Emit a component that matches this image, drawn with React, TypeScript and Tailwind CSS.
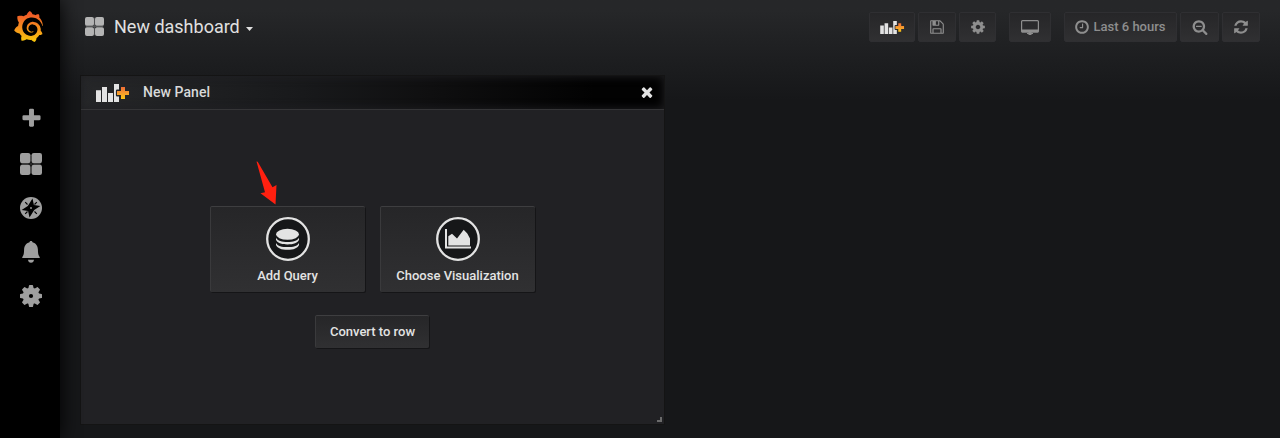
import React from 'react';
import { SiGrafana } from 'react-icons/si';

const COG =
  'M1152 896q0-106-75-181t-181-75-181 75-75 181 75 181 181 75 181-75 75-181zm512-109v222q0 12-8 23t-20 13l-185 28q-19 54-39 91 35 50 107 138 10 12 10 25t-9 23q-27 37-99 108t-94 71q-12 0-26-9l-138-108q-44 23-91 38-16 136-29 186-7 28-36 28h-222q-14 0-24.5-8.5t-11.5-21.5l-28-184q-49-16-90-37l-141 107q-10 9-25 9-14 0-25-11-126-114-165-168-7-10-7-23 0-12 8-23 15-21 51-66.5t54-70.5q-27-50-41-99l-183-27q-13-2-21-12.5t-8-23.5v-222q0-12 8-23t19-13l186-28q14-46 39-92-40-57-107-138-10-12-10-24 0-10 9-23 26-36 98.5-107.5t94.5-71.5q13 0 26 10l138 107q44-23 91-38 16-136 29-186 7-28 36-28h222q14 0 24.5 8.5t11.5 21.5l28 184q49 16 90 37l142-107q9-9 24-9 13 0 25 10 129 119 165 170 7 8 7 22 0 12-8 23-15 21-51 66.5t-54 70.5q26 50 41 98l183 28q13 2 21 12.5t8 23.5z';
const FLOPPY =
  'M512 1536h768v-384h-768v384zm896 0h128v-896q0-14-10-38.5t-20-34.5l-281-281q-10-10-34-20t-39-10v416q0 40-28 68t-68 28h-576q-40 0-68-28t-28-68v-416h-128v1280h128v-416q0-40 28-68t68-28h832q40 0 68 28t28 68v416zm-384-928v-320q0-13-9.5-22.5t-22.5-9.5h-192q-13 0-22.5 9.5t-9.5 22.5v320q0 13 9.5 22.5t22.5 9.5h192q13 0 22.5-9.5t9.5-22.5zm640 32v928q0 40-28 68t-68 28h-1344q-40 0-68-28t-28-68v-1344q0-40 28-68t68-28h928q40 0 88 20t76 48l280 280q28 28 48 76t20 88z';
const CLOCK =
  'M1024 544v448q0 14-9 23t-23 9h-320q-14 0-23-9t-9-23v-64q0-14 9-23t23-9h224v-352q0-14 9-23t23-9h64q14 0 23 9t9 23zm416 352q0-148-73-273t-198-198-273-73-273 73-198 198-73 273 73 273 198 198 273 73 273-73 198-198 73-273zm224 0q0 209-103 385.5t-279.5 279.5-385.5 103-385.5-103-279.5-279.5-103-385.5 103-385.5 279.5-279.5 385.5-103 385.5 103 279.5 279.5 103 385.5z';
const ZOOM_OUT =
  'M1088 800v64q0 13-9.5 22.5t-22.5 9.5h-576q-13 0-22.5-9.5t-9.5-22.5v-64q0-13 9.5-22.5t22.5-9.5h576q13 0 22.5 9.5t9.5 22.5zm128 32q0-185-131.5-316.5t-316.5-131.5-316.5 131.5-131.5 316.5 131.5 316.5 316.5 131.5 316.5-131.5 131.5-316.5zm512 832q0 53-37.5 90.5t-90.5 37.5q-54 0-90-38l-343-342q-179 124-399 124-143 0-273.5-55.5t-225-150-150-225-55.5-273.5 55.5-273.5 150-225 225-150 273.5-55.5 273.5 55.5 225 150 150 225 55.5 273.5q0 220-124 399l343 343q37 37 37 90z';
const REFRESH =
  'M1639 1056q0 5-1 7-64 268-268 434.5t-478 166.5q-146 0-282.5-55t-243.5-157l-129 129q-19 19-45 19t-45-19-19-45v-448q0-26 19-45t45-19h448q26 0 45 19t19 45-19 45l-137 137q71 66 161 102t187 36q134 0 250-65t186-179q11-17 53-117 8-23 30-23h192q13 0 22.5 9.5t9.5 22.5zm25-800v448q0 26-19 45t-45 19h-448q-26 0-45-19t-19-45 19-45l138-138q-148-137-349-137-134 0-250 65t-186 179q-11 17-53 117-8 23-30 23h-199q-13 0-22.5-9.5t-9.5-22.5v-7q65-268 270-434.5t480-166.5q146 0 284 55.5t245 156.5l130-129q19-19 45-19t45 19 19 45z';
const TIMES =
  'M1490 1322q0 40-28 68l-136 136q-28 28-68 28t-68-28l-294-294-294 294q-28 28-68 28t-68-28l-136-136q-28-28-28-68t28-68l294-294-294-294q-28-28-28-68t28-68l136-136q28-28 68-28t68 28l294 294 294-294q28-28 68-28t68 28l136 136q28 28 28 68t-28 68l-294 294 294 294q28 28 28 68z';
const PLUS =
  'M1600 736v192q0 40-28 68t-68 28h-416v416q0 40-28 68t-68 28h-192q-40 0-68-28t-28-68v-416h-416q-40 0-68-28t-28-68v-192q0-40 28-68t68-28h416v-416q0-40 28-68t68-28h192q40 0 68 28t28 68v416h416q40 0 68 28t28 68z';

function Glyph({ d, className }: { d: string; className: string }) {
  return (
    <svg viewBox="0 0 1792 1792" className={className} fill="currentColor" aria-hidden="true">
      <path d={d} />
    </svg>
  );
}

function Apps({ className }: { className: string }) {
  return (
    <svg viewBox="0 0 22 22" className={className} aria-hidden="true">
      <path d="M1 10.5h20v1H1zM10.5 1h1v20h-1z" fill="currentColor" opacity="0.35" />
      <g fill="currentColor">
        <rect width="10.4" height="10.2" rx="2.2" />
        <rect x="11.6" width="10.4" height="10.2" rx="2.2" />
        <rect y="11.8" width="10.4" height="10.2" rx="2.2" />
        <rect x="11.6" y="11.8" width="10.4" height="10.2" rx="2.2" />
      </g>
    </svg>
  );
}

function AddPanel({ className, id }: { className: string; id: string }) {
  return (
    <svg viewBox="0 0 34 18" className={className} aria-hidden="true">
      <defs>
        <linearGradient id={id} x1="0" y1="0" x2="0" y2="1">
          <stop offset="0" stopColor="#ef6c35" />
          <stop offset="0.5" stopColor="#f59a2e" />
          <stop offset="1" stopColor="#fbc611" />
        </linearGradient>
      </defs>
      <g fill="#e3e3e3">
        <path d="M0 6.3h5V18H0zM6 3h5v15H6zM12 9h5v9h-5z" />
        <path d="M18 0h5v5.500h-1.800q-1.300 0-1.300 1.300v4.400q0 1.300 1.300 1.300H23V18h-5z" />
      </g>
      <path d="M25 3h4v4h4v4h-4v4h-4v-4h-4V7h4z" fill={`url(#${id})`} />
    </svg>
  );
}

function Compass() {
  return (
    <svg viewBox="0 0 22 22" className="size-[22px]" aria-hidden="true">
      <circle cx="11" cy="11" r="11" fill="currentColor" />
      <g fill="#000">
        <path d="M12.500 1.500 13.900 7.900 20.400 9 14.200 12.900 9.500 20.500 8.100 14.100 1.600 13 7.800 9.100z" />
        <path d="m16.400 4.800.8.800-2.300 2.300-.8-.8zM5.600 4.800l-.8.800 2.300 2.300.8-.8zM5.600 17.200l-.8-.8 2.300-2.300.8.8zM16.400 17.200l.8-.8-2.300-2.300-.8.8z" />
      </g>
      <circle cx="11" cy="11" r="0.9" fill="currentColor" />
    </svg>
  );
}

function Bell() {
  return (
    <svg viewBox="0 0 18 22" className="h-[22px] w-[18px]" fill="currentColor" aria-hidden="true">
      <path d="M9 0c.9 0 1.3.5 1.5 1.2C14 2 15.800 5 15.900 8.500c.1 3.700.4 5.300 1.100 6.500l.7 1.100c.4.600.2.900-.5.900H.8c-.7 0-.9-.3-.5-.9L1 15c.7-1.200 1-2.800 1.100-6.500C2.200 5 4 2 7.500 1.200 7.700.5 8.100 0 9 0zM6 18.800h6c-.2 1.800-1.300 2.900-3 2.900s-2.800-1.100-3-2.900z" />
    </svg>
  );
}

function Gear() {
  return (
    <svg viewBox="0 0 22 22" className="size-[22px]" aria-hidden="true">
      <g fill="currentColor">
        <circle cx="11" cy="11" r="8.300" />
        {[0, 45, 90, 135, 180, 225, 270, 315].map((angle) => (
          <path key={angle} d="M9.600 0h2.800q.5 0 .6.500l.8 3.500H8.200L9 .5q.1-.5.600-.5z" transform={`rotate(${angle} 11 11)`} />
        ))}
      </g>
      <circle cx="11" cy="11" r="2.100" fill="#000" />
    </svg>
  );
}

function Monitor() {
  return (
    <svg viewBox="0 0 18 15" className="h-[15px] w-[18px]" aria-hidden="true">
      <rect x="0.6" y="0.6" width="16.8" height="11.400" rx="1" fill="none" stroke="currentColor" strokeWidth="1.200" />
      <path d="M.5 9.500h17v2.200q0 .8-.8.8H1.300q-.8 0-.8-.8zM6 13h6v1H6zM7.500 12h3v3h-3z" fill="currentColor" />
    </svg>
  );
}

function DatabaseBadge() {
  return (
    <svg viewBox="0 0 44 44" className="size-11 shrink-0" aria-hidden="true">
      <circle cx="22" cy="22" r="20.800" fill="#161719" stroke="#e3e3e3" strokeWidth="2.300" />
      <g fill="#e3e3e3">
        <ellipse cx="21.500" cy="17.300" rx="11.500" ry="5.500" />
        <path d="M10 20.700c1.500 3 6 4.200 11.500 4.200S31.500 23.700 33 20.700v2.100c-1 3-5.500 4.700-11.500 4.700S11 25.800 10 22.800z" />
        <path d="M10 25.900c1.500 3 6 4.200 11.500 4.200S31.500 28.900 33 25.900v2c-1 3-5.500 4.900-11.500 4.900S11 30.900 10 27.900z" />
      </g>
    </svg>
  );
}

function ChartBadge() {
  return (
    <svg viewBox="0 0 44 44" className="size-11 shrink-0" aria-hidden="true">
      <circle cx="22" cy="22" r="20.800" fill="#161719" stroke="#e3e3e3" strokeWidth="2.300" />
      <g fill="#e3e3e3">
        <path d="M9 12h2v17.500h24v2H9z" />
        <path d="M12.300 19.200l3.700-2.400 5 4.600L27.700 12.700l3.600 3.800L34 21.500v7H12.300z" />
      </g>
    </svg>
  );
}

const NAV_BUTTON =
  'flex h-[30px] items-center justify-center rounded-[2px] border border-[#2f2f32] bg-linear-to-b from-[#262628] to-[#303032] text-[#8e8e8e]';
const PANEL_BUTTON =
  'rounded-[2px] border-t border-l border-t-[#3e3e40] border-l-[#3a3a3c] bg-linear-to-b from-[#262628] to-[#303032] text-[13px] font-medium text-[#e3e3e3] shadow-[1px_1px_0_#151517]';

export default function App() {
  return (
    <div className="flex h-[438px] w-full overflow-hidden bg-[#161719] font-[Roboto,sans-serif] text-[#d8d9da]">
      <nav className="z-10 flex w-[60px] shrink-0 flex-col items-center bg-black pl-0.5 text-[#9f9f9f] shadow-[0_0_20px_#000]">
        <svg width="0" height="0" className="h-0 w-0" aria-hidden="true">
          <defs>
            <linearGradient id="flame" x1="0" y1="0" x2="0" y2="1">
              <stop offset="0.1" stopColor="#f05a28" />
              <stop offset="0.5" stopColor="#f58a1f" />
              <stop offset="1" stopColor="#fbca0a" />
            </linearGradient>
          </defs>
        </svg>
        <SiGrafana fill="url(#flame)" className="mt-[11px] mr-[5px] size-[31px]" />
        <Glyph d={PLUS} className="mt-[65px] size-[23px]" />
        <div className="mt-[23px] flex flex-col items-center gap-[22px]">
          <Apps className="size-[22px]" />
          <Compass />
          <Bell />
          <Gear />
        </div>
      </nav>

      <main className="flex min-w-0 flex-1 flex-col bg-linear-to-b from-[#262729] from-[10px] to-[#161719] to-[100px]">
        <header className="flex h-[54px] items-center pr-5 pl-[25px]">
          <Apps className="mb-px size-[19px] text-[#b4b4b4]" />
          <h1 className="ml-[10px] text-[18px] leading-[22px] text-[#e0e0e0]">New dashboard</h1>
          <svg viewBox="0 0 7 4" className="mt-1 ml-[6px] h-1 w-[7px]" fill="#e0e0e0" aria-hidden="true">
            <path d="M0 0h7L3.500 4z" />
          </svg>

          <div className="ml-auto flex">
            <button className={`${NAV_BUTTON} w-[46px]`}>
              <AddPanel id="toolbar-plus" className="h-[13px] w-[25px]" />
            </button>
            <button className={`${NAV_BUTTON} ml-[3px] w-[38px]`}>
              <Glyph d={FLOPPY} className="size-[16px]" />
            </button>
            <button className={`${NAV_BUTTON} ml-[3px] w-[37px]`}>
              <Glyph d={COG} className="size-[16px]" />
            </button>
            <button className={`${NAV_BUTTON} ml-[13px] w-[42px]`}>
              <Monitor />
            </button>
            <button className={`${NAV_BUTTON} ml-[13px] w-[113px] gap-[3px] pr-[1px] text-[13px] font-medium`}>
              <Glyph d={CLOCK} className="size-[16px]" />
              <span>Last 6 hours</span>
            </button>
            <button className={`${NAV_BUTTON} ml-[3px] w-[39px]`}>
              <Glyph d={ZOOM_OUT} className="size-[16px]" />
            </button>
            <button className={`${NAV_BUTTON} ml-[3px] w-[38px]`}>
              <Glyph d={REFRESH} className="size-[16px]" />
            </button>
          </div>
        </header>

        <section className="mt-[21px] ml-5 flex h-[350px] w-[585px] flex-col border border-[#141414] bg-[#212124]">
          <div className="flex h-[34px] shrink-0 items-center border-b border-[#353537] bg-[linear-gradient(90deg,#262729_0%,#18191b_38%,#0f0f10_60%,#020202_88%)] pr-[9px] pl-[15px] shadow-[inset_0_0_10px_#212124]">
            <AddPanel id="panel-plus" className="h-[18px] w-[34px]" />
            <h2 className="ml-[13px] text-[14px] font-medium tracking-[0.06px]">New Panel</h2>
            <Glyph d={TIMES} className="mb-px ml-auto size-[16px] text-[#e3e3e3]" />
          </div>

          <div className="relative flex flex-1 flex-col items-center pt-[96px]">
            <div className="flex gap-[15px] pr-px">
              <button className={`${PANEL_BUTTON} flex h-[86px] w-[155px] flex-col items-center pt-[10px]`}>
                <DatabaseBadge />
                <span className="mt-[5px]">Add Query</span>
              </button>
              <button className={`${PANEL_BUTTON} flex h-[86px] w-[155px] flex-col items-center pt-[10px]`}>
                <ChartBadge />
                <span className="mt-[5px]">Choose Visualization</span>
              </button>
            </div>
            <button className={`${PANEL_BUTTON} mt-[23px] mr-[1px] h-[33px] w-[114px]`}>Convert to row</button>

            <svg
              viewBox="0 0 22 44"
              className="absolute top-[51px] left-[175px] h-[44px] w-[22px]"
              fill="#ff2010"
              aria-hidden="true"
            >
              <path d="M.5.500 1.700.8 16.500 26.200 20.500 24 19.500 43.500 4.500 32.200 9 31.300z" />
            </svg>
            <svg viewBox="0 0 5 5" className="absolute right-[2px] bottom-[2px] size-[5px]" fill="#6b6b6b" aria-hidden="true">
              <path d="M3 0h2v5H0V3h3z" />
            </svg>
          </div>
        </section>
      </main>
    </div>
  );
}
